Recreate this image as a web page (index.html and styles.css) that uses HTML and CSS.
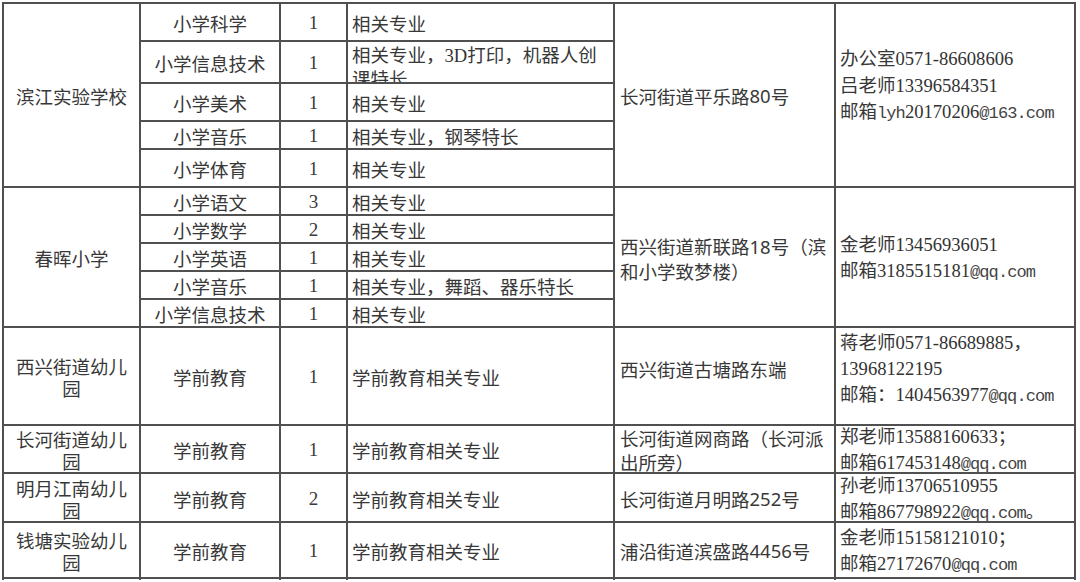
FILE: index.html
```html
<!DOCTYPE html>
<html lang="zh-CN">
<head>
<meta charset="utf-8">
<title>招聘岗位表</title>
<link rel="stylesheet" href="styles.css">
</head>
<body>
<div class="sheet">
  <div class="cell ctr span5">滨江实验学校</div>
  <div class="cell ctr">小学科学</div>
  <div class="cell ctr num">1</div>
  <div class="cell req">相关专业</div>
  <div class="cell addr span5">长河街道平乐路<span class="d">80</span>号</div>
  <div class="cell contact span5 lift"><div>办公室<span class="m">0571-86608606</span><br>吕老师<span class="m">13396584351</span><br>邮箱<span class="mm">lyh</span><span class="m">20170206</span><span class="mm">@163.com</span></div></div>

  <div class="cell ctr">小学信息技术</div>
  <div class="cell ctr num">1</div>
  <div class="cell req clip"><div>相关专业，<span class="m">3D</span>打印，机器人创<br>课特长</div></div>

  <div class="cell ctr">小学美术</div>
  <div class="cell ctr num">1</div>
  <div class="cell req">相关专业</div>

  <div class="cell ctr">小学音乐</div>
  <div class="cell ctr num">1</div>
  <div class="cell req">相关专业，钢琴特长</div>

  <div class="cell ctr">小学体育</div>
  <div class="cell ctr num">1</div>
  <div class="cell req">相关专业</div>

  <div class="cell ctr span5">春晖小学</div>
  <div class="cell ctr">小学语文</div>
  <div class="cell ctr num">3</div>
  <div class="cell req">相关专业</div>
  <div class="cell addr span5"><div>西兴街道新联路<span class="d">18</span>号（滨<br>和小学致梦楼）</div></div>
  <div class="cell contact span5"><div>金老师<span class="m">13456936051</span><br>邮箱<span class="m">3185515181</span><span class="mm">@qq.com</span></div></div>

  <div class="cell ctr">小学数学</div>
  <div class="cell ctr num">2</div>
  <div class="cell req">相关专业</div>

  <div class="cell ctr">小学英语</div>
  <div class="cell ctr num">1</div>
  <div class="cell req">相关专业</div>

  <div class="cell ctr">小学音乐</div>
  <div class="cell ctr num">1</div>
  <div class="cell req">相关专业，舞蹈、器乐特长</div>

  <div class="cell ctr">小学信息技术</div>
  <div class="cell ctr num">1</div>
  <div class="cell req">相关专业</div>

  <div class="cell ctr school"><div>西兴街道幼儿<br>园</div></div>
  <div class="cell ctr">学前教育</div>
  <div class="cell ctr num">1</div>
  <div class="cell req">学前教育相关专业</div>
  <div class="cell addr lift2">西兴街道古塘路东端</div>
  <div class="cell contact lift2"><div>蒋老师<span class="m">0571-86689885</span>，<br><span class="m">13968122195</span><br>邮箱：<span class="m">1404563977</span><span class="mm">@qq.com</span></div></div>

  <div class="cell ctr school"><div>长河街道幼儿<br>园</div></div>
  <div class="cell ctr">学前教育</div>
  <div class="cell ctr num">1</div>
  <div class="cell req">学前教育相关专业</div>
  <div class="cell addr"><div>长河街道网商路（长河派<br>出所旁）</div></div>
  <div class="cell contact"><div>郑老师<span class="m">13588160633</span>；<br>邮箱<span class="m">617453148</span><span class="mm">@qq.com</span></div></div>

  <div class="cell ctr school"><div>明月江南幼儿<br>园</div></div>
  <div class="cell ctr">学前教育</div>
  <div class="cell ctr num">2</div>
  <div class="cell req">学前教育相关专业</div>
  <div class="cell addr">长河街道月明路<span class="d">252</span>号</div>
  <div class="cell contact"><div>孙老师<span class="m">13706510955</span><br>邮箱<span class="m">867798922</span><span class="mm">@qq.com</span>。</div></div>

  <div class="cell ctr school"><div>钱塘实验幼儿<br>园</div></div>
  <div class="cell ctr">学前教育</div>
  <div class="cell ctr num">1</div>
  <div class="cell req">学前教育相关专业</div>
  <div class="cell addr">浦沿街道滨盛路<span class="d">4456</span>号</div>
  <div class="cell contact"><div>金老师<span class="m">15158121010</span>；<br>邮箱<span class="m">27172670</span><span class="mm">@qq.com</span></div></div>

  <div class="cell"></div>
  <div class="cell"></div>
  <div class="cell"></div>
  <div class="cell"></div>
  <div class="cell"></div>
  <div class="cell"></div>
</div>
</body>
</html>
```

FILE: styles.css
```css
html, body {
  margin: 0;
  padding: 0;
  background: #ffffff;
  overflow: hidden;
}

body {
  width: 1080px;
  height: 582px;
  font-family: "Noto Sans CJK SC", "Noto Sans", sans-serif;
  font-size: 18.5px;
  font-weight: 400;
  color: #383838;
}

.sheet {
  display: grid;
  grid-template-columns: 135px 138px 65px 265px 219px 238px;
  grid-template-rows: 36px 40px 36px 26px 36px 26px 26px 26px 26px 26px 96px 46px 47px 54px 1px;
  gap: 2px;
  padding: 2px 2px 0 2px;
  margin: 2px 0 0 2px;
  width: max-content;
  background: #505050;
}

.cell {
  background: #ffffff;
  display: flex;
  align-items: center;
  overflow: hidden;
  white-space: nowrap;
  padding-top: 2px;
  box-sizing: border-box;
  line-height: 24px;
}

.span5 {
  grid-row: span 5;
}

.ctr {
  justify-content: center;
  text-align: center;
}

.school {
  line-height: 22px;
}

.num {
  font-family: "Liberation Serif", serif;
  font-size: 19px;
  color: #3a3a3a;
}

.req {
  padding-left: 4px;
}

.clip {
  align-items: flex-start;
  padding-top: 1px;
  line-height: 23px;
}

.addr {
  padding-left: 5px;
}

.contact {
  padding-left: 4px;
  line-height: 25px;
}

.lift {
  padding-bottom: 20px;
  line-height: 24.5px;
}

.lift2 {
  padding-bottom: 17px;
}

.m {
  font-family: "Liberation Serif", serif;
  font-size: 18.6px;
  color: #333333;
}

.mm {
  font-family: "Liberation Mono", monospace;
  font-size: 17px;
  letter-spacing: -0.9px;
  color: #444444;
}

.d {
  font-family: "Noto Sans", "Noto Sans CJK SC", sans-serif;
}
```
